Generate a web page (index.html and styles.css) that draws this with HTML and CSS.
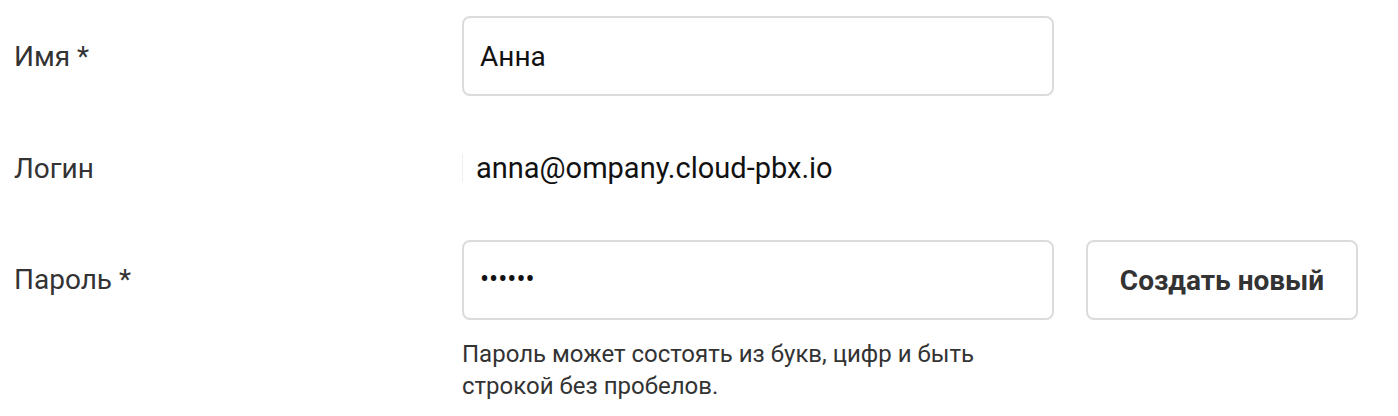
FILE: index.html
```html
<!DOCTYPE html>
<html lang="ru">
<head>
<meta charset="utf-8">
<link rel="stylesheet" href="styles.css">
</head>
<body>
<form class="form">
  <div class="row">
    <div class="label">Имя *</div>
    <div class="field"><div class="input">Анна</div></div>
  </div>
  <div class="row">
    <div class="label">Логин</div>
    <div class="field"><div class="static"><span class="caret"></span>anna@ompany.cloud-pbx.io</div></div>
  </div>
  <div class="row row-top">
    <div class="label label-pad">Пароль *</div>
    <div class="field">
      <div class="pw-line">
        <div class="input input-pw">••••••</div>
        <button type="button" class="btn">Создать новый</button>
      </div>
      <p class="hint">Пароль может состоять из букв, цифр и быть<br>строкой без пробелов.</p>
    </div>
  </div>
</form>
</body>
</html>
```
FILE: styles.css
```css
html, body {
  margin: 0;
  padding: 0;
  background: #fff;
}
body {
  font-family: Roboto, "Noto Sans", sans-serif;
  color: #333;
}
.form {
  display: flex;
  flex-direction: column;
  gap: 32px;
  padding: 16px 0 0 14px;
}
.row {
  display: flex;
  align-items: center;
  min-height: 80px;
}
.row-top {
  align-items: flex-start;
}
.label {
  width: 448px;
  font-size: 28px;
  color: #333;
}
.label-pad {
  line-height: 80px;
}
.field {
  display: flex;
  flex-direction: column;
}
.input {
  box-sizing: border-box;
  width: 592px;
  height: 80px;
  border: 2px solid #dcdcdc;
  border-radius: 8px;
  padding: 0 0 0 16px;
  display: flex;
  align-items: center;
  font-size: 28px;
  color: #111;
}
.input-pw {
  font-size: 27px;
  padding-bottom: 2px;
}
.static {
  display: flex;
  align-items: center;
  font-size: 29px;
  color: #111;
}
.caret {
  width: 1px;
  height: 28px;
  background: #eee;
  margin-right: 13px;
}
.pw-line {
  display: flex;
  gap: 32px;
}
.btn {
  box-sizing: border-box;
  width: 272px;
  height: 80px;
  border: 2px solid #dcdcdc;
  border-radius: 8px;
  background: #fff;
  font-family: Roboto, "Noto Sans", sans-serif;
  font-weight: 700;
  font-size: 28px;
  color: #333;
  padding: 0;
}
.hint {
  margin: 18px 0 0;
  font-size: 24px;
  line-height: 32px;
  color: #333;
}
```
